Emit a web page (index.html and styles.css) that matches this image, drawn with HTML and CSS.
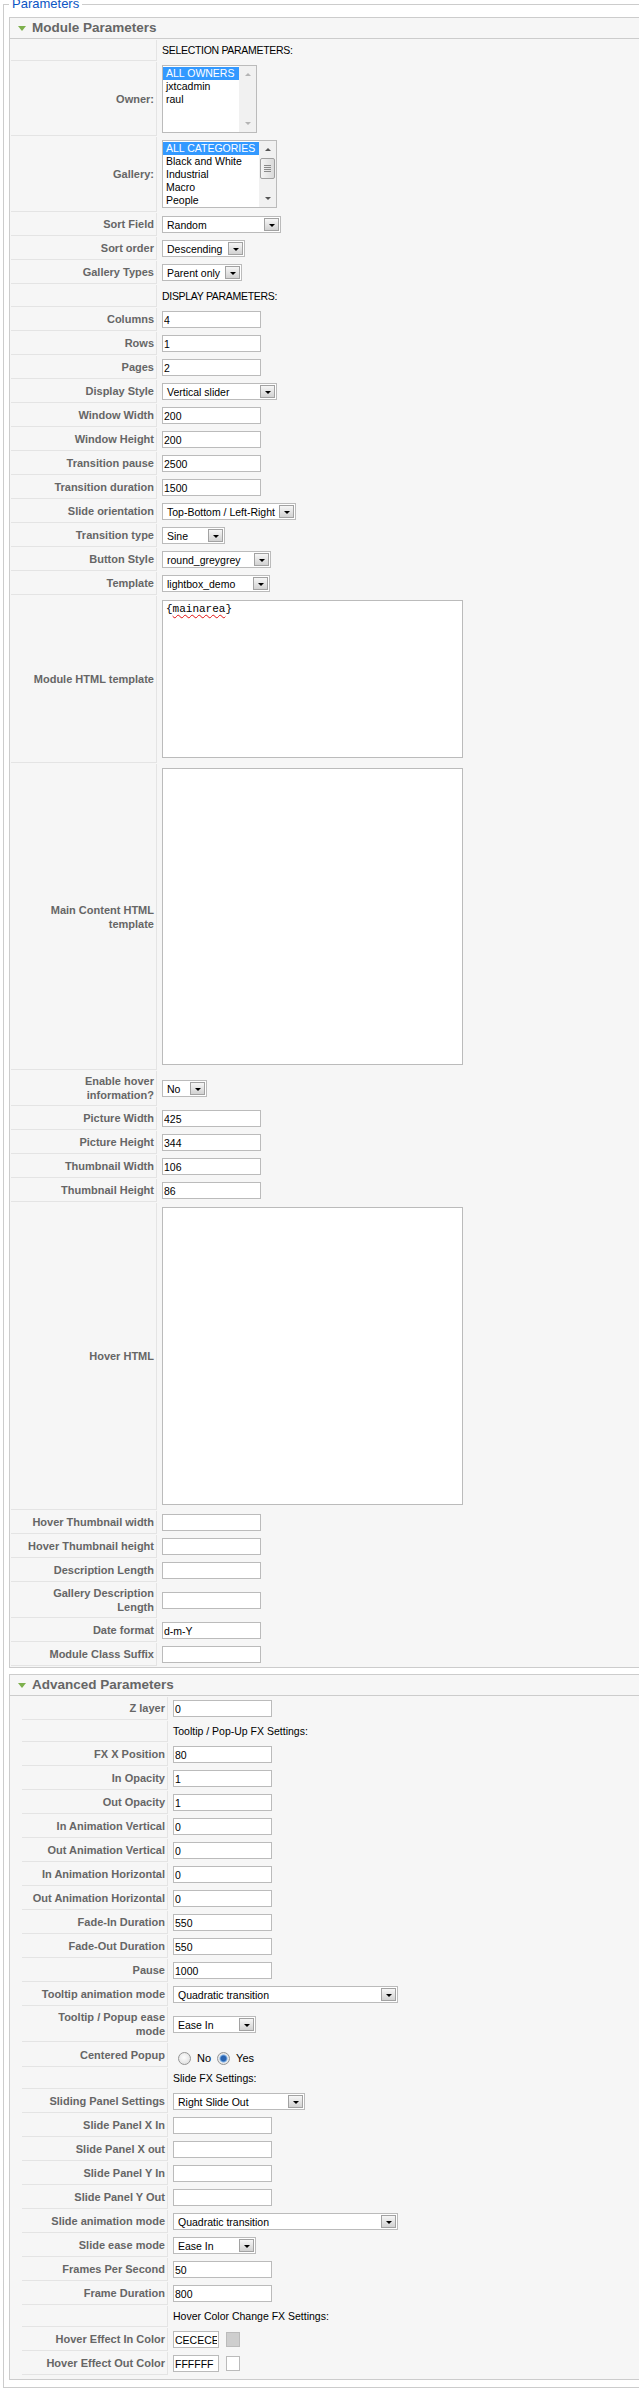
FILE: index.html
```html
<!DOCTYPE html>
<html>
<head>
<meta charset="utf-8">
<title>Parameters</title>
<link rel="stylesheet" href="styles.css">
</head>
<body>
<fieldset class="params">
  <legend>Parameters</legend>

  <div class="panel">
    <h3 class="panel-title"><svg class="arrow" width="8" height="5" viewBox="0 0 8 5"><polygon points="0,0 8,0 4,5" fill="#7db04c"/></svg>Module Parameters</h3>
    <div class="panel-body">
      <div class="row note"><div class="key"></div><div class="val caps">SELECTION PARAMETERS:</div></div>
      <div class="row lb-row"><div class="key">Owner:</div><div class="val">
        <div class="lb w95">
          <div class="lb-items"><div class="on">ALL OWNERS</div><div>jxtcadmin</div><div>raul</div></div>
          <div class="lb-bar off"><span class="up"></span><span class="down"></span></div>
        </div></div></div>
      <div class="row lb-row lb-row2"><div class="key">Gallery:</div><div class="val">
        <div class="lb w115">
          <div class="lb-items"><div class="on">ALL CATEGORIES</div><div>Black and White</div><div>Industrial</div><div>Macro</div><div>People</div></div>
          <div class="lb-bar"><span class="up"></span><span class="thumb"></span><span class="fill"></span><span class="down"></span></div>
        </div></div></div>
      <div class="row"><div class="key">Sort Field</div><div class="val"><div class="sel w119"><span class="opt">Random</span><span class="btn"></span></div></div></div>
      <div class="row"><div class="key">Sort order</div><div class="val"><div class="sel w83"><span class="opt">Descending</span><span class="btn"></span></div></div></div>
      <div class="row"><div class="key">Gallery Types</div><div class="val"><div class="sel w80"><span class="opt">Parent only</span><span class="btn"></span></div></div></div>
      <div class="row note tall"><div class="key"></div><div class="val caps">DISPLAY PARAMETERS:</div></div>
      <div class="row"><div class="key">Columns</div><div class="val"><input class="txt" type="text" value="4"></div></div>
      <div class="row"><div class="key">Rows</div><div class="val"><input class="txt" type="text" value="1"></div></div>
      <div class="row"><div class="key">Pages</div><div class="val"><input class="txt" type="text" value="2"></div></div>
      <div class="row"><div class="key">Display Style</div><div class="val"><div class="sel w115"><span class="opt">Vertical slider</span><span class="btn"></span></div></div></div>
      <div class="row"><div class="key">Window Width</div><div class="val"><input class="txt" type="text" value="200"></div></div>
      <div class="row"><div class="key">Window Height</div><div class="val"><input class="txt" type="text" value="200"></div></div>
      <div class="row"><div class="key">Transition pause</div><div class="val"><input class="txt" type="text" value="2500"></div></div>
      <div class="row"><div class="key">Transition duration</div><div class="val"><input class="txt" type="text" value="1500"></div></div>
      <div class="row"><div class="key">Slide orientation</div><div class="val"><div class="sel w134"><span class="opt">Top-Bottom / Left-Right</span><span class="btn"></span></div></div></div>
      <div class="row"><div class="key">Transition type</div><div class="val"><div class="sel w63"><span class="opt">Sine</span><span class="btn"></span></div></div></div>
      <div class="row"><div class="key">Button Style</div><div class="val"><div class="sel w109"><span class="opt">round_greygrey</span><span class="btn"></span></div></div></div>
      <div class="row"><div class="key">Template</div><div class="val"><div class="sel w108"><span class="opt">lightbox_demo</span><span class="btn"></span></div></div></div>
      <div class="row area"><div class="key">Module HTML template</div><div class="val"><div class="ta h158">{<span class="spell">mainarea</span>}</div></div></div>
      <div class="row area"><div class="key">Main Content HTML<br>template</div><div class="val"><div class="ta h297"></div></div></div>
      <div class="row"><div class="key">Enable hover<br>information?</div><div class="val"><div class="sel w45"><span class="opt">No</span><span class="btn"></span></div></div></div>
      <div class="row"><div class="key">Picture Width</div><div class="val"><input class="txt" type="text" value="425"></div></div>
      <div class="row"><div class="key">Picture Height</div><div class="val"><input class="txt" type="text" value="344"></div></div>
      <div class="row"><div class="key">Thumbnail Width</div><div class="val"><input class="txt" type="text" value="106"></div></div>
      <div class="row"><div class="key">Thumbnail Height</div><div class="val"><input class="txt" type="text" value="86"></div></div>
      <div class="row area"><div class="key">Hover HTML</div><div class="val"><div class="ta h298"></div></div></div>
      <div class="row"><div class="key">Hover Thumbnail width</div><div class="val"><input class="txt" type="text" value=""></div></div>
      <div class="row"><div class="key">Hover Thumbnail height</div><div class="val"><input class="txt" type="text" value=""></div></div>
      <div class="row"><div class="key">Description Length</div><div class="val"><input class="txt" type="text" value=""></div></div>
      <div class="row"><div class="key">Gallery Description<br>Length</div><div class="val"><input class="txt" type="text" value=""></div></div>
      <div class="row"><div class="key">Date format</div><div class="val"><input class="txt" type="text" value="d-m-Y"></div></div>
      <div class="row"><div class="key">Module Class Suffix</div><div class="val"><input class="txt" type="text" value=""></div></div>
    </div>
  </div>

  <div class="panel">
    <h3 class="panel-title"><svg class="arrow" width="8" height="5" viewBox="0 0 8 5"><polygon points="0,0 8,0 4,5" fill="#7db04c"/></svg>Advanced Parameters</h3>
    <div class="panel-body adv">
      <div class="row"><div class="key">Z layer</div><div class="val"><input class="txt" type="text" value="0"></div></div>
      <div class="row note"><div class="key"></div><div class="val">Tooltip / Pop-Up FX Settings:</div></div>
      <div class="row"><div class="key">FX X Position</div><div class="val"><input class="txt" type="text" value="80"></div></div>
      <div class="row"><div class="key">In Opacity</div><div class="val"><input class="txt" type="text" value="1"></div></div>
      <div class="row"><div class="key">Out Opacity</div><div class="val"><input class="txt" type="text" value="1"></div></div>
      <div class="row"><div class="key">In Animation Vertical</div><div class="val"><input class="txt" type="text" value="0"></div></div>
      <div class="row"><div class="key">Out Animation Vertical</div><div class="val"><input class="txt" type="text" value="0"></div></div>
      <div class="row"><div class="key">In Animation Horizontal</div><div class="val"><input class="txt" type="text" value="0"></div></div>
      <div class="row"><div class="key">Out Animation Horizontal</div><div class="val"><input class="txt" type="text" value="0"></div></div>
      <div class="row"><div class="key">Fade-In Duration</div><div class="val"><input class="txt" type="text" value="550"></div></div>
      <div class="row"><div class="key">Fade-Out Duration</div><div class="val"><input class="txt" type="text" value="550"></div></div>
      <div class="row"><div class="key">Pause</div><div class="val"><input class="txt" type="text" value="1000"></div></div>
      <div class="row"><div class="key">Tooltip animation mode</div><div class="val"><div class="sel w225"><span class="opt">Quadratic transition</span><span class="btn"></span></div></div></div>
      <div class="row"><div class="key">Tooltip / Popup ease<br>mode</div><div class="val"><div class="sel w83"><span class="opt">Ease In</span><span class="btn"></span></div></div></div>
      <div class="row radios"><div class="key">Centered Popup</div><div class="val">
        <input class="radio" type="radio" name="centered"><span class="rlabel">No</span>
        <input class="radio" type="radio" name="centered" checked><span class="rlabel">Yes</span>
      </div></div>
      <div class="row note"><div class="key"></div><div class="val">Slide FX Settings:</div></div>
      <div class="row"><div class="key">Sliding Panel Settings</div><div class="val"><div class="sel w132"><span class="opt">Right Slide Out</span><span class="btn"></span></div></div></div>
      <div class="row"><div class="key">Slide Panel X In</div><div class="val"><input class="txt" type="text" value=""></div></div>
      <div class="row"><div class="key">Slide Panel X out</div><div class="val"><input class="txt" type="text" value=""></div></div>
      <div class="row"><div class="key">Slide Panel Y In</div><div class="val"><input class="txt" type="text" value=""></div></div>
      <div class="row"><div class="key">Slide Panel Y Out</div><div class="val"><input class="txt" type="text" value=""></div></div>
      <div class="row"><div class="key">Slide animation mode</div><div class="val"><div class="sel w225"><span class="opt">Quadratic transition</span><span class="btn"></span></div></div></div>
      <div class="row"><div class="key">Slide ease mode</div><div class="val"><div class="sel w83"><span class="opt">Ease In</span><span class="btn"></span></div></div></div>
      <div class="row"><div class="key">Frames Per Second</div><div class="val"><input class="txt" type="text" value="50"></div></div>
      <div class="row"><div class="key">Frame Duration</div><div class="val"><input class="txt" type="text" value="800"></div></div>
      <div class="row note"><div class="key"></div><div class="val">Hover Color Change FX Settings:</div></div>
      <div class="row"><div class="key">Hover Effect In Color</div><div class="val"><input class="txt w46" type="text" value="CECECE"><span class="swatch gray"></span></div></div>
      <div class="row"><div class="key">Hover Effect Out Color</div><div class="val"><input class="txt w46" type="text" value="FFFFFF"><span class="swatch white"></span></div></div>
    </div>
  </div>
</fieldset>
</body>
</html>
```
FILE: styles.css
```css
* { box-sizing: border-box; }

html, body { margin: 0; padding: 0; }

body {
  overflow: hidden;
  background: #fff;
  color: #000;
  font-family: "Liberation Sans", Arial, Helvetica, sans-serif;
  font-size: 11px;
}

.params {
  width: 720px;
  min-width: 0;
  margin: -4px 0 0 3px;
  padding: 5px 0 7px 5px;
  border: 1px solid #ccc;
}

.params > legend {
  padding: 0 3px;
  font-size: 13px;
  line-height: 16px;
  color: #0b55c4;
}

.panel {
  border: 1px solid #ccc;
  background: #f6f6f6;
  margin-bottom: 6px;
}
.panel:last-child { margin-bottom: 0; }

.panel-title {
  margin: 0;
  height: 21px;
  padding-left: 8px;
  border-bottom: 1px solid #ccc;
  display: flex;
  align-items: center;
  font-size: 13.5px;
  line-height: 20px;
  font-weight: bold;
  color: #666;
}
.panel-title .arrow { margin-right: 6px; flex: none; }

.panel-body { padding: 0 0 1px 1px; }
.panel-body.adv { padding: 0 0 4px 12px; }

.row { display: flex; margin-top: 1px; }

.key {
  flex: 0 0 146px;
  display: flex;
  align-items: center;
  justify-content: flex-end;
  text-align: right;
  padding: 3px 2px 3px 4px;
  border-right: 1px solid #e4e4e4;
  border-bottom: 1px solid #e4e4e4;
  font-weight: bold;
  color: #666;
  line-height: 14px;
}

.val {
  margin-left: 1px;
  padding: 3px 0 3px 4px;
  display: flex;
  align-items: center;
  font-size: 10.5px;
}

.note .val { line-height: 15px; }
.note.tall .val { line-height: 16px; }
.caps { letter-spacing: -0.3px; }

.lb-row .val { align-items: flex-start; }
.lb-row2 .val { padding-bottom: 4px; }
.area .val { padding: 4px 0 5px 4px; align-items: flex-start; }
.radios .val { padding: 9px 0 2px 4px; line-height: 13px; font-size: 11px; }

/* text inputs */
.txt {
  width: 99px;
  height: 17px;
  margin: 0;
  padding: 0 1px;
  border: 1px solid #bbb;
  background: #fff;
  color: #000;
  font-family: "Liberation Sans", Arial, sans-serif;
  font-size: 10.5px;
  outline: none;
}
.txt.w46 { width: 46px; }

.swatch {
  width: 14px;
  height: 15px;
  margin-left: 7px;
  border: 1px solid #bbb;
}
.swatch.gray { background: #cecece; }
.swatch.white { background: #fff; }

/* dropdowns */
.sel {
  height: 17px;
  padding: 1px;
  border: 1px solid #bbb;
  background: #fff;
  display: flex;
  align-items: center;
  white-space: nowrap;
}
.sel .opt { flex: 1; padding-left: 3px; overflow: hidden; }
.sel .btn {
  flex: none;
  width: 15px;
  height: 13px;
  border: 1px solid #a2a2a2;
  background: linear-gradient(#f6f6f6, #d2d2d2);
  display: flex;
  align-items: center;
  justify-content: center;
}
.sel .btn::after {
  content: "";
  border-left: 3px solid transparent;
  border-right: 3px solid transparent;
  border-top: 3px solid #000;
  margin-top: 1px;
}
.w45 { width: 45px; }
.w63 { width: 63px; }
.w80 { width: 80px; }
.w83 { width: 83px; }
.w108 { width: 108px; }
.w109 { width: 109px; }
.w115 { width: 115px; }
.w119 { width: 119px; }
.w132 { width: 132px; }
.w134 { width: 134px; }
.w225 { width: 225px; }
.w95 { width: 95px; }

/* list boxes */
.lb {
  height: 68px;
  display: flex;
  border: 1px solid #bbb;
  background: #fff;
  overflow: hidden;
}
.lb.w115 { width: 115px; }
.lb-items { flex: 1; padding-top: 1px; min-width: 0; }
.lb-items div {
  height: 13px;
  line-height: 13px;
  padding-left: 3px;
  white-space: nowrap;
}
.lb-items .on { background: #3399ff; color: #fff; }

.lb-bar {
  flex: 0 0 17px;
  background: #f1f1f1;
  display: flex;
  flex-direction: column;
}
.lb-bar .up, .lb-bar .down {
  flex: 0 0 17px;
  display: flex;
  align-items: center;
  justify-content: center;
}
.lb-bar.off { justify-content: space-between; }
.lb-bar .up::after {
  content: "";
  border-left: 3px solid transparent;
  border-right: 3px solid transparent;
  border-bottom: 3px solid #555;
}
.lb-bar .down::after {
  content: "";
  border-left: 3px solid transparent;
  border-right: 3px solid transparent;
  border-top: 3px solid #555;
}
.lb-bar.off .up::after { border-bottom-color: #b4b4b4; }
.lb-bar.off .down::after { border-top-color: #b4b4b4; }
.lb-bar .thumb {
  flex: 0 0 21px;
  margin: 0 1px;
  border: 1px solid #a0a0a0;
  border-radius: 2px;
  background: linear-gradient(90deg, #f4f4f4, #dadada);
  display: flex;
  align-items: center;
  justify-content: center;
}
.lb-bar .thumb::after {
  content: "";
  width: 7px;
  height: 7px;
  background: repeating-linear-gradient(#8a8a8a 0 1px, transparent 1px 2px);
}
.lb-bar .fill { flex: 1; }

/* text areas */
.ta {
  width: 301px;
  border: 1px solid #bbb;
  background: #fff;
  padding: 2px 3px;
  font-family: "Liberation Mono", "Courier New", monospace;
  font-size: 11px;
  line-height: 13px;
}
.h158 { height: 158px; }
.h297 { height: 297px; }
.h298 { height: 298px; }
.spell {
  text-decoration: underline wavy #e01010;
  text-decoration-thickness: 1px;
  text-underline-offset: 2px;
}

/* radios */
.radio {
  appearance: none;
  -webkit-appearance: none;
  flex: none;
  width: 13px;
  height: 13px;
  margin: 0 6px 0 5px;
  border: 1px solid #959595;
  border-radius: 50%;
  background: radial-gradient(circle at 45% 40%, #fdfdfd, #d9d9d9);
}
.radio:checked {
  background: radial-gradient(circle, #2a64b0 0, #2a64b0 2.5px, #7fb0e6 3.5px, #ececec 4.5px, #d4d4d4 100%);
}
.rlabel { margin-right: 1px; }
```
